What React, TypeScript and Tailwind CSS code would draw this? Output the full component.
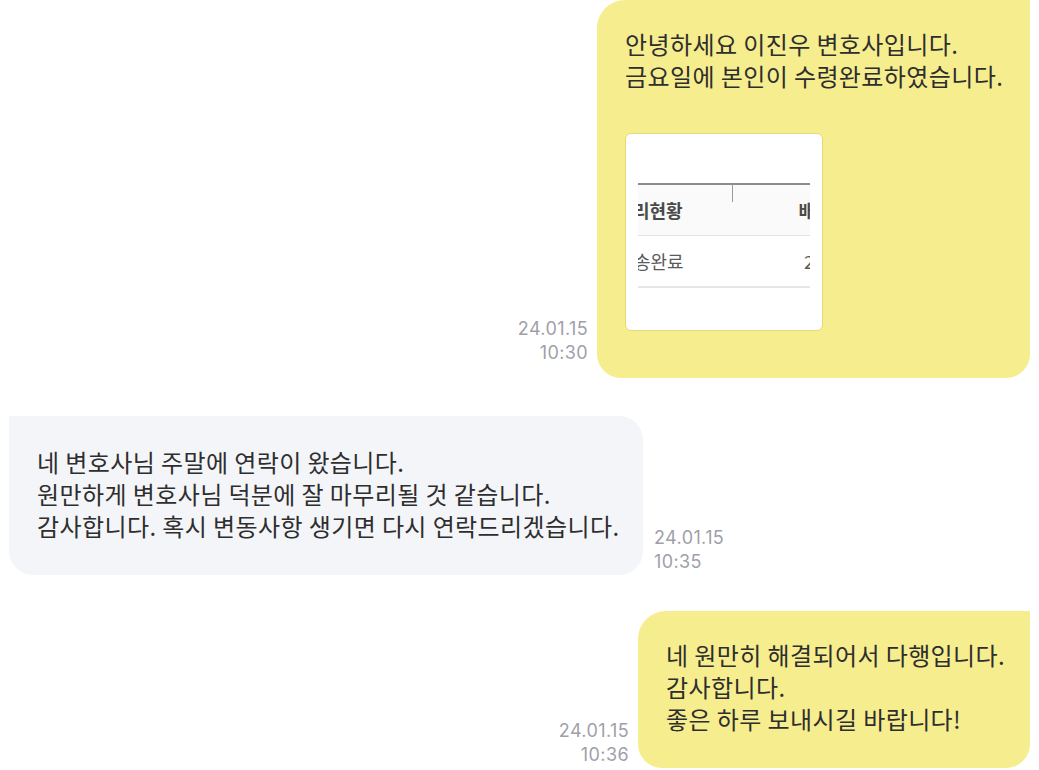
import React from 'react';

type Msg = {
  mine: boolean;
  lines: string[];
  date: string;
  time: string;
  width: string;
  withImage?: boolean;
};

const messages: Msg[] = [
  {
    mine: true,
    lines: ['안녕하세요 이진우 변호사입니다.', '금요일에 본인이 수령완료하였습니다.'],
    date: '24.01.15',
    time: '10:30',
    width: 'w-[433px]',
    withImage: true,
  },
  {
    mine: false,
    lines: [
      '네 변호사님 주말에 연락이 왔습니다.',
      '원만하게 변호사님 덕분에 잘 마무리될 것 같습니다.',
      '감사합니다. 혹시 변동사항 생기면 다시 연락드리겠습니다.',
    ],
    date: '24.01.15',
    time: '10:35',
    width: 'w-[634px]',
  },
  {
    mine: true,
    lines: ['네 원만히 해결되어서 다행입니다.', '감사합니다.', '좋은 하루 보내시길 바랍니다!'],
    date: '24.01.15',
    time: '10:36',
    width: 'w-[392px]',
  },
];

function Stamp({ date, time, mine, lift }: { date: string; time: string; mine: boolean; lift?: boolean }) {
  return (
    <div
      className={`${lift ? 'mb-[13px]' : 'mb-[1px]'} text-[18px] leading-[24px] tracking-[0.4px] text-[#9f9faa] font-['Inter',sans-serif] ${
        mine ? 'text-right' : 'text-left'
      }`}
    >
      <div>{date}</div>
      <div>{time}</div>
    </div>
  );
}

function Attachment() {
  return (
    <div className="mt-[41px] w-[198px] h-[198px] bg-white rounded-[6px] border border-[#e6da72] p-[12px] tracking-normal">
      <div className="h-full w-full overflow-hidden pt-[37px] text-[18px] font-['Noto_Sans_CJK_KR',sans-serif]">
        <div className="border-t-2 border-[#8c8c8c]">
          <div className="flex h-[51px] bg-[#fafafa] border-b border-[#e4e4e4]">
            <div className="w-[94px] flex items-center font-semibold text-[#4a4a4a]">
              <span className="-ml-[5px] whitespace-nowrap">리현황</span>
            </div>
            <div className="w-[1px] h-[17px] bg-[#9a9a9a]" />
            <div className="flex-1 flex items-center justify-end font-semibold text-[#4a4a4a]">
              <span className="-mr-[5px]">배</span>
            </div>
          </div>
          <div className="flex h-[52px] items-center justify-between border-b-2 border-[#e6e6e6] text-[#5a5a5a]">
            <span className="-ml-[4px] whitespace-nowrap">송완료</span>
            <span className="-mr-[4px]">2</span>
          </div>
        </div>
      </div>
    </div>
  );
}

export default function App() {
  return (
    <div className="min-h-[770px] w-full bg-white px-[9px] flex flex-col font-['Noto_Sans_CJK_KR','Noto_Sans',sans-serif]">
      {messages.map((m, i) => (
        <div
          key={i}
          className={`flex items-end ${m.mine ? 'justify-end gap-[9px]' : 'justify-start gap-[11px]'} ${
            i === 1 ? 'mt-[38px]' : i === 2 ? 'mt-[36px]' : ''
          }`}
        >
          {m.mine && <Stamp date={m.date} time={m.time} mine lift={m.withImage} />}
          <div
            className={`${m.width} px-[28px] text-[24px] leading-[32px] tracking-[0.4px] text-[#2e2e2e] ${
              m.mine
                ? 'bg-[#f6ed8f] rounded-tl-[28px] rounded-bl-[24px] rounded-br-[24px] pt-[28px]'
                : 'bg-[#f4f5f9] rounded-tr-[24px] rounded-bl-[24px] rounded-br-[24px] pt-[30px]'
            } ${m.withImage ? 'pb-[47px]' : 'pb-[33px]'}`}
          >
            {m.lines.map((l) => (
              <div key={l} className="whitespace-nowrap">
                {l}
              </div>
            ))}
            {m.withImage && <Attachment />}
          </div>
          {!m.mine && <Stamp date={m.date} time={m.time} mine={false} />}
        </div>
      ))}
    </div>
  );
}
